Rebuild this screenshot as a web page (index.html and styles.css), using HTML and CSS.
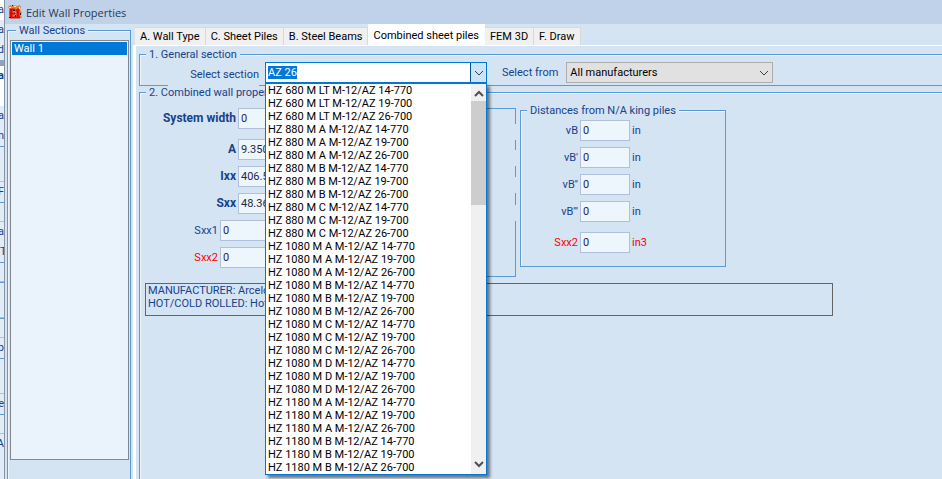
FILE: index.html
```html
<!DOCTYPE html>
<html lang="en">
<head>
  <meta charset="UTF-8" />
  <meta name="viewport" content="width=device-width, initial-scale=1.0"/>
  <title>Edit Wall Properties</title>
  <link rel="stylesheet" href="styles.css">
</head>
<body>
  <!-- parent window, only its right part is visible -->
  <div class="backdrop" aria-hidden="true">
    <span class="piece piece-white">a</span>
    <span class="piece">a</span>
    <span class="piece">d</span>
    <span class="bar"></span>
    <span class="piece piece-white piece-bold">a</span>
    <span class="space space-white"></span>
    <span class="piece">a</span>
    <span class="piece">n</span>
    <span class="box box-medium"></span>
    <span class="piece">F</span>
    <span class="box box-small"></span>
    <span class="piece">a</span>
    <span class="piece piece-left">Th</span>
    <span class="box box-small"></span>
    <span class="box box-medium"></span>
    <span class="box box-small"></span>
    <span class="piece">p</span>
    <span class="box box-medium"></span>
    <span class="piece">re</span>
    <span class="box box-small"></span>
    <span class="piece">A</span>
  </div>

  <div class="window">
    <header class="titlebar">
      <svg class="app-icon" viewBox="0 0 16 16" width="16" height="16">
        <path d="M1 3 3 1l2 1 2-1 3 1 3-1 1 2-1 2 2 4-1 2 1 3-3-1-2 1H5l-2-1-1-4 1-3z" fill="#d98a3a"/>
        <path d="M2 3h2v1H2zM7 2h2v1H7zM12 3h1v2h-1z" fill="#fbe7a0"/>
        <path d="M3 5h5v1H5v3h3v1H5v3h4v1H3zM10 5h2v8h1v1H9v-1h1V7H9V6h1z" fill="#e00b0b" stroke="#e00b0b"/>
        <path d="M6 6h2v1H6zM8 11h1v2H8zM13 9h1v2h-1zM5 1h1v1H5zM2 13h2v1H2z" fill="#1b1310"/>
      </svg>
      <h1>Edit Wall Properties</h1>
    </header>

    <div class="content">
      <fieldset class="group sections">
        <legend>Wall Sections</legend>
        <select class="section-list" size="2" aria-label="Wall Sections">
          <option selected>Wall 1</option>
        </select>
      </fieldset>

      <main class="tab-control">
        <div class="tabs" role="tablist">
          <button class="tab" role="tab">A. Wall Type</button>
          <button class="tab" role="tab">C. Sheet Piles</button>
          <button class="tab" role="tab">B. Steel Beams</button>
          <button class="tab active" role="tab" aria-selected="true">Combined sheet piles</button>
          <button class="tab" role="tab">FEM 3D</button>
          <button class="tab" role="tab">F. Draw</button>
        </div>

        <div class="tab-page" role="tabpanel">
          <fieldset class="group general">
            <legend>1. General section</legend>
            <div class="general-row">
              <label class="section-label" for="section">Select section</label>
              <div class="combo">
                <input type="text" id="section" value="AZ 26" spellcheck="false" autocomplete="off">
                <button class="combo-btn" id="combo-btn" aria-label="Open list">
                  <svg viewBox="0 0 10 6" width="10" height="6"><path d="M1 1l4 4 4-4" fill="none" stroke="#404040"/></svg>
                </button>
                <div class="dropdown" id="dropdown">
                  <ul class="options" id="options" role="listbox" aria-label="Sections"></ul>
                  <div class="scrollbar">
                    <svg viewBox="0 0 10 7" width="10" height="7"><path d="M1 6l4-4 4 4" fill="none" stroke="#505050" stroke-width="2"/></svg>
                    <div class="thumb"></div>
                    <svg viewBox="0 0 10 7" width="10" height="7"><path d="M1 1l4 4 4-4" fill="none" stroke="#505050" stroke-width="2"/></svg>
                  </div>
                </div>
              </div>
              <label class="from-label" for="maker">Select from</label>
              <div class="select-wrap">
                <select id="maker">
                  <option>All manufacturers</option>
                </select>
                <svg viewBox="0 0 10 6" width="10" height="6"><path d="M1 1l4 4 4-4" fill="none" stroke="#404040"/></svg>
              </div>
            </div>
          </fieldset>

          <fieldset class="group combined">
            <legend>2. Combined wall properties</legend>
            <div class="columns">
              <div class="props">
                <div class="field main first"><label for="width">System width</label><input type="text" id="width" value="0"></div>
                <div class="field main"><label for="area">A</label><input type="text" id="area" value="9.350"></div>
                <div class="field main"><label for="ixx">Ixx</label><input type="text" id="ixx" value="406.5"></div>
                <div class="field main"><label for="sxx">Sxx</label><input type="text" id="sxx" value="48.36"></div>
                <div class="field minor"><label for="sxx1">Sxx1</label><input type="text" id="sxx1" value="0"></div>
                <div class="field minor red"><label for="sxx2">Sxx2</label><input type="text" id="sxx2" value="0"></div>
              </div>

              <div class="frame"></div>

              <fieldset class="group distances">
                <legend>Distances from N/A king piles</legend>
                <div class="field"><label for="vb1">vB</label><input type="text" id="vb1" value="0"><span>in</span></div>
                <div class="field"><label for="vb2">vB'</label><input type="text" id="vb2" value="0"><span>in</span></div>
                <div class="field"><label for="vb3">vB''</label><input type="text" id="vb3" value="0"><span>in</span></div>
                <div class="field"><label for="vb4">vB'''</label><input type="text" id="vb4" value="0"><span>in</span></div>
                <div class="field red last"><label for="dsxx2">Sxx2</label><input type="text" id="dsxx2" value="0"><span>in3</span></div>
              </fieldset>
            </div>

            <div class="notes">
              MANUFACTURER: ArcelorMittal<br>
              HOT/COLD ROLLED: Hot
            </div>
          </fieldset>
        </div>
      </main>
    </div>
  </div>

  <script>
    const list = document.getElementById("options");
    const section = document.getElementById("section");
    const dropdown = document.getElementById("dropdown");

    const piles = [
      "680 M LT", "880 M A", "880 M B", "880 M C",
      "1080 M A", "1080 M B", "1080 M C", "1080 M D",
      "1180 M A", "1180 M B"
    ];
    const sheets = ["14-770", "19-700", "26-700"];

    // every king pile is combined with every sheet pile
    piles.forEach((pile) => {
      sheets.forEach((sheet) => {
        const item = document.createElement("li");
        item.setAttribute("role", "option");
        item.textContent = `HZ ${pile} M-12/AZ ${sheet}`;
        list.appendChild(item);
      });
    });

    list.addEventListener("click", (event) => {
      if (event.target.tagName !== "LI") return;
      section.value = event.target.textContent;
      dropdown.hidden = true;
    });

    document.getElementById("combo-btn").addEventListener("click", () => {
      dropdown.hidden = !dropdown.hidden;
    });

    section.focus();
    section.select();
  </script>
</body>
</html>
```
FILE: styles.css
```css
* {
  box-sizing: border-box;
}

body {
  margin: 0;
  height: 100vh;
  display: flex;
  overflow: hidden;
  font-family: Roboto, "Liberation Sans", sans-serif;
  font-size: 11px;
  line-height: 13px;
  color: #15428b;
  background-color: #d5e4f3;
}

input,
select,
button {
  font: inherit;
  margin: 0;
  border-radius: 0;
  outline: none;
}

/* parent window */
.backdrop {
  width: 5px;
  flex-shrink: 0;
  display: flex;
  flex-direction: column;
  overflow: hidden;
  background-color: #e1ecf8;
  border-right: 1px solid #8694a6;
}

.piece {
  height: 20px;
  flex-shrink: 0;
  line-height: 20px;
  display: flex;
  justify-content: flex-end;
}

.piece-white,
.space-white {
  background-color: #fff;
}

.piece-bold {
  font-weight: bold;
}

.piece-left {
  justify-content: flex-start;
}

.bar {
  height: 6px;
  flex-shrink: 0;
  background-color: #8ea3c0;
}

.space {
  height: 20px;
  flex-shrink: 0;
}

.box {
  flex-shrink: 0;
  border-top: 1px solid #5b9bd5;
  border-bottom: 1px solid #b0bfdb;
}

.box-small {
  height: 20px;
}

.box-medium {
  height: 36px;
}

/* dialog window */
.window {
  flex: 1;
  min-width: 0;
  display: flex;
  flex-direction: column;
}

.titlebar {
  height: 24px;
  flex-shrink: 0;
  display: flex;
  align-items: center;
  gap: 3px;
  padding-left: 2px;
  background-color: #c0d2e9;
}

.titlebar h1 {
  margin: 0;
  font-family: "Open Sans", "Noto Sans", sans-serif;
  font-size: 11px;
  font-weight: normal;
  color: #2b3a52;
}

.content {
  flex: 1;
  min-height: 0;
  display: flex;
  gap: 2px;
  padding-left: 2px;
}

/* group boxes */
.group {
  margin: 0;
  padding: 0;
  min-width: 0;
  border: 1px solid #5b9bd5;
  box-shadow: inset 1px 1px 0 #edf4fb;
}

.group legend {
  margin-left: 6px;
  padding: 0 3px;
  background-color: #d5e4f3;
}

.sections {
  width: 124px;
  flex-shrink: 0;
  display: flex;
  padding: 3px 1px 19px 2px;
  border-bottom: none;
}

.section-list {
  width: 100%;
  height: 100%;
  padding: 1px;
  overflow: hidden;
  border: 1px solid #828790;
  background-color: #eaf2fc;
}

.section-list option {
  min-height: 13px;
  padding: 0 2px;
}

.section-list option:checked {
  background: #0078d7 linear-gradient(#0078d7, #0078d7);
  color: #fff;
  -webkit-text-fill-color: #fff;
}

/* tabs */
.tab-control {
  flex: 1;
  min-width: 0;
  display: flex;
  flex-direction: column;
}

.tabs {
  height: 21px;
  flex-shrink: 0;
  display: flex;
  align-items: flex-end;
  padding-left: 2px;
}

.tab {
  height: 18px;
  padding: 0 5px;
  border: 1px solid #d9d9d9;
  border-left: none;
  border-bottom: none;
  background-color: #f0f0f0;
  color: #000;
  white-space: nowrap;
}

.tab.active {
  height: 21px;
  border-color: #fff;
  background-color: #fff;
}

.tab-page {
  flex: 1;
  min-height: 0;
  display: flex;
  flex-direction: column;
  padding: 2px 0 0 3px;
  border-top: 1px solid #fff;
  border-left: 3px solid #fff;
}

/* general section */
.general {
  flex-shrink: 0;
  padding: 1px 0 2px 28px;
  border-right: none;
}

.general legend {
  margin-left: -22px;
}

.general-row {
  display: flex;
}

.section-label {
  width: 91px;
  margin-bottom: -3px;
  padding-top: 6px;
  text-align: right;
  background-color: #d5e4f3;
}

.combo {
  position: relative;
  display: flex;
  width: 222px;
  height: 21px;
  margin-left: 6px;
  border: 1px solid #0078d7;
}

.combo input {
  flex: 1;
  min-width: 0;
  padding: 0 2px;
  border: none;
  background-color: #fff;
  color: #000;
}

.combo input::selection {
  background-color: #0078d7;
  color: #fff;
}

.combo-btn {
  width: 16px;
  padding: 0;
  display: flex;
  align-items: center;
  justify-content: center;
  border: none;
  border-left: 1px solid #005499;
  background-color: #cce4f7;
}

.dropdown {
  position: absolute;
  z-index: 10;
  top: 20px;
  left: -1px;
  right: -1px;
  display: flex;
  border: 1px solid #0078d7;
  background-color: #fff;
  box-shadow: 3px 3px 3px rgba(0, 0, 0, 0.5);
}

.dropdown[hidden] {
  display: none;
}

.options {
  flex: 1;
  margin: 0;
  padding: 0 2px;
  list-style: none;
  color: #000;
}

.scrollbar {
  width: 15px;
  display: flex;
  flex-direction: column;
  align-items: center;
  padding: 6px 0;
  background-color: #f0f0f0;
}

.thumb {
  width: 100%;
  height: 104px;
  margin: 4px 0 auto;
  background-color: #cdcdcd;
}

.from-label {
  margin-left: 15px;
  padding-top: 4px;
}

.select-wrap {
  position: relative;
  width: 207px;
  margin-left: 8px;
}

.select-wrap select {
  width: 100%;
  height: 21px;
  padding: 0 3px;
  appearance: none;
  border: 1px solid #adadad;
  background-color: #e1e1e1;
  color: #000;
}

.select-wrap svg {
  position: absolute;
  top: 8px;
  right: 4px;
  pointer-events: none;
}

/* combined wall properties */
.combined {
  flex: 1;
  padding-top: 5px;
  border-right: none;
  border-bottom: none;
}

.columns {
  display: flex;
}

.field {
  display: flex;
  align-items: center;
  gap: 2px;
  margin-bottom: 6px;
}

.field label {
  text-align: right;
}

.field input {
  height: 21px;
  padding: 0 2px;
  border: 1px solid #b0bfdb;
  background-color: #edf5fd;
  color: #1f2a44;
}

.red {
  color: #f00;
}

.props {
  width: 160px;
  padding: 4px 0 3px;
}

.props input {
  flex: 1;
  min-width: 0;
}

.main label {
  width: 96px;
  font-size: 12px;
  font-weight: bold;
}

.minor label {
  width: 78px;
}

.first {
  margin-bottom: 10px;
}

/* frame whose right line is broken next to each unit */
.frame {
  width: 206px;
  margin: 4px 4px 0 10px;
  border: 1px solid #5b9bd5;
  border-right: none;
  background: linear-gradient(
    #5b9bd5 15px, transparent 15px 31px,
    #5b9bd5 31px 41px, transparent 41px 57px,
    #5b9bd5 57px 68px, transparent 68px 84px,
    #5b9bd5 84px 96px, transparent 96px 112px,
    #5b9bd5 112px) right / 1px 100% no-repeat;
}

.distances {
  width: 206px;
  align-self: flex-start;
  padding: 3px 0 7px;
}

.distances label {
  width: 57px;
}

.distances input {
  width: 50px;
}

.distances .last {
  margin-top: 10px;
}

.notes {
  max-width: 688px;
  min-height: 33px;
  margin: 6px 0 0 5px;
  padding: 0 2px;
  border: 1px solid #646464;
}
```
